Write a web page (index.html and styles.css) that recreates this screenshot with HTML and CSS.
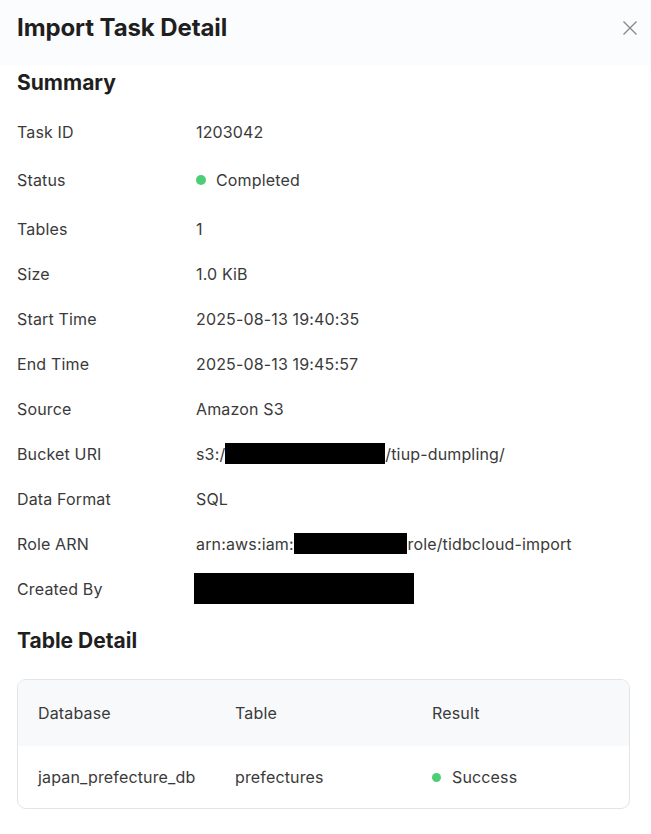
FILE: index.html
```html
<!DOCTYPE html>
<html lang="en">
  <head>
    <meta charset="UTF-8" />
    <meta name="viewport" content="width=device-width, initial-scale=1.0" />
    <title>Import Task Detail</title>
    <link rel="stylesheet" href="styles.css">
  </head>
  <body>
    <div class="drawer">
      <div class="drawer-header">
        <h1>Import Task Detail</h1>
        <button class="close-btn" aria-label="Close">
          <svg width="16" height="16" viewBox="0 0 16 16">
            <path d="M1.5 1.5 L14.5 14.5 M14.5 1.5 L1.5 14.5" stroke="#8a8a8a" stroke-width="1.4" fill="none" />
          </svg>
        </button>
      </div>

      <div class="drawer-body">
        <h2>Summary</h2>
        <dl class="summary">
          <div class="row"><dt>Task ID</dt><dd>1203042</dd></div>
          <div class="row status-row"><dt>Status</dt><dd><span class="dot"></span>Completed</dd></div>
          <div class="row"><dt>Tables</dt><dd>1</dd></div>
          <div class="row"><dt>Size</dt><dd>1.0 KiB</dd></div>
          <div class="row"><dt>Start Time</dt><dd>2025-08-13 19:40:35</dd></div>
          <div class="row"><dt>End Time</dt><dd>2025-08-13 19:45:57</dd></div>
          <div class="row"><dt>Source</dt><dd>Amazon S3</dd></div>
          <div class="row"><dt>Bucket URI</dt><dd>s3:/<span class="redact bucket"></span>/tiup-dumpling/</dd></div>
          <div class="row"><dt>Data Format</dt><dd>SQL</dd></div>
          <div class="row"><dt>Role ARN</dt><dd>arn:aws:iam::<span class="redact arn"></span>role/tidbcloud-import</dd></div>
          <div class="row"><dt>Created By</dt><dd><span class="redact creator"></span></dd></div>
        </dl>

        <h2>Table Detail</h2>
        <div class="table-card">
          <table>
            <thead>
              <tr>
                <th>Database</th>
                <th>Table</th>
                <th>Result</th>
              </tr>
            </thead>
            <tbody>
              <tr>
                <td>japan_prefecture_db</td>
                <td>prefectures</td>
                <td><span class="dot small"></span>Success</td>
              </tr>
            </tbody>
          </table>
        </div>
      </div>
    </div>
  </body>
</html>
```

FILE: styles.css
```css
body {
  margin: 0;
  padding: 0;
  font-family: Inter, "Noto Sans", sans-serif;
  background: #ffffff;
  color: #3a3a3a;
}
.drawer {
  width: 651px;
}
.drawer-header {
  display: flex;
  align-items: center;
  justify-content: space-between;
  height: 65px;
  padding: 0 13px 0 17px;
  box-sizing: border-box;
  background: #fbfcfe;
}
h1 {
  margin: 0 0 10px 0;
  font-size: 24px;
  font-weight: 700;
  color: #1f1f1f;
  letter-spacing: -0.1px;
}
.close-btn {
  background: none;
  border: none;
  padding: 0;
  margin-bottom: 10px;
  cursor: pointer;
  display: flex;
}
.drawer-body {
  padding: 0 21px 0 17px;
}
h2 {
  margin: 6px 0 14px 0;
  font-size: 21px;
  font-weight: 700;
  color: #1f1f1f;
  line-height: 24px;
}
.summary {
  margin: 0 0 18px 0;
}
.row {
  display: flex;
  align-items: center;
  height: 45px;
  font-size: 16px;
  letter-spacing: 0.15px;
}
.status-row {
  height: 52px;
}
dt {
  width: 179px;
  color: #3a3a3a;
}
dd {
  margin: 0;
  display: flex;
  align-items: center;
  color: #3a3a3a;
}
.dot {
  display: inline-block;
  width: 10px;
  height: 10px;
  border-radius: 50%;
  background: #4cce75;
  margin-right: 10px;
}
.dot.small {
  width: 9px;
  height: 9px;
  margin-right: 11px;
}
.redact {
  display: inline-block;
  background: #000;
  height: 21px;
}
.bucket {
  width: 160px;
}
.arn {
  width: 113px;
  margin-left: -5px;
  margin-right: 1px;
}
.creator {
  width: 220px;
  height: 31px;
  margin-left: -2px;
}
.table-card {
  margin-top: 26px;
  border: 1px solid #e3e4e6;
  border-radius: 9px;
  overflow: hidden;
}
table {
  width: 100%;
  border-collapse: collapse;
}
th,
td {
  text-align: left;
  font-size: 16px;
  padding: 0 0 0 20px;
  color: #3a3a3a;
  letter-spacing: 0.15px;
}
th {
  font-weight: 400;
  height: 66px;
  background: #f8f9fa;
}
td {
  height: 62px;
}
th:nth-child(1),
td:nth-child(1) {
  width: 177px;
}
th:nth-child(2),
td:nth-child(2) {
  width: 177px;
}
td:nth-child(3) span {
  vertical-align: middle;
  position: relative;
  top: -1px;
}
```
